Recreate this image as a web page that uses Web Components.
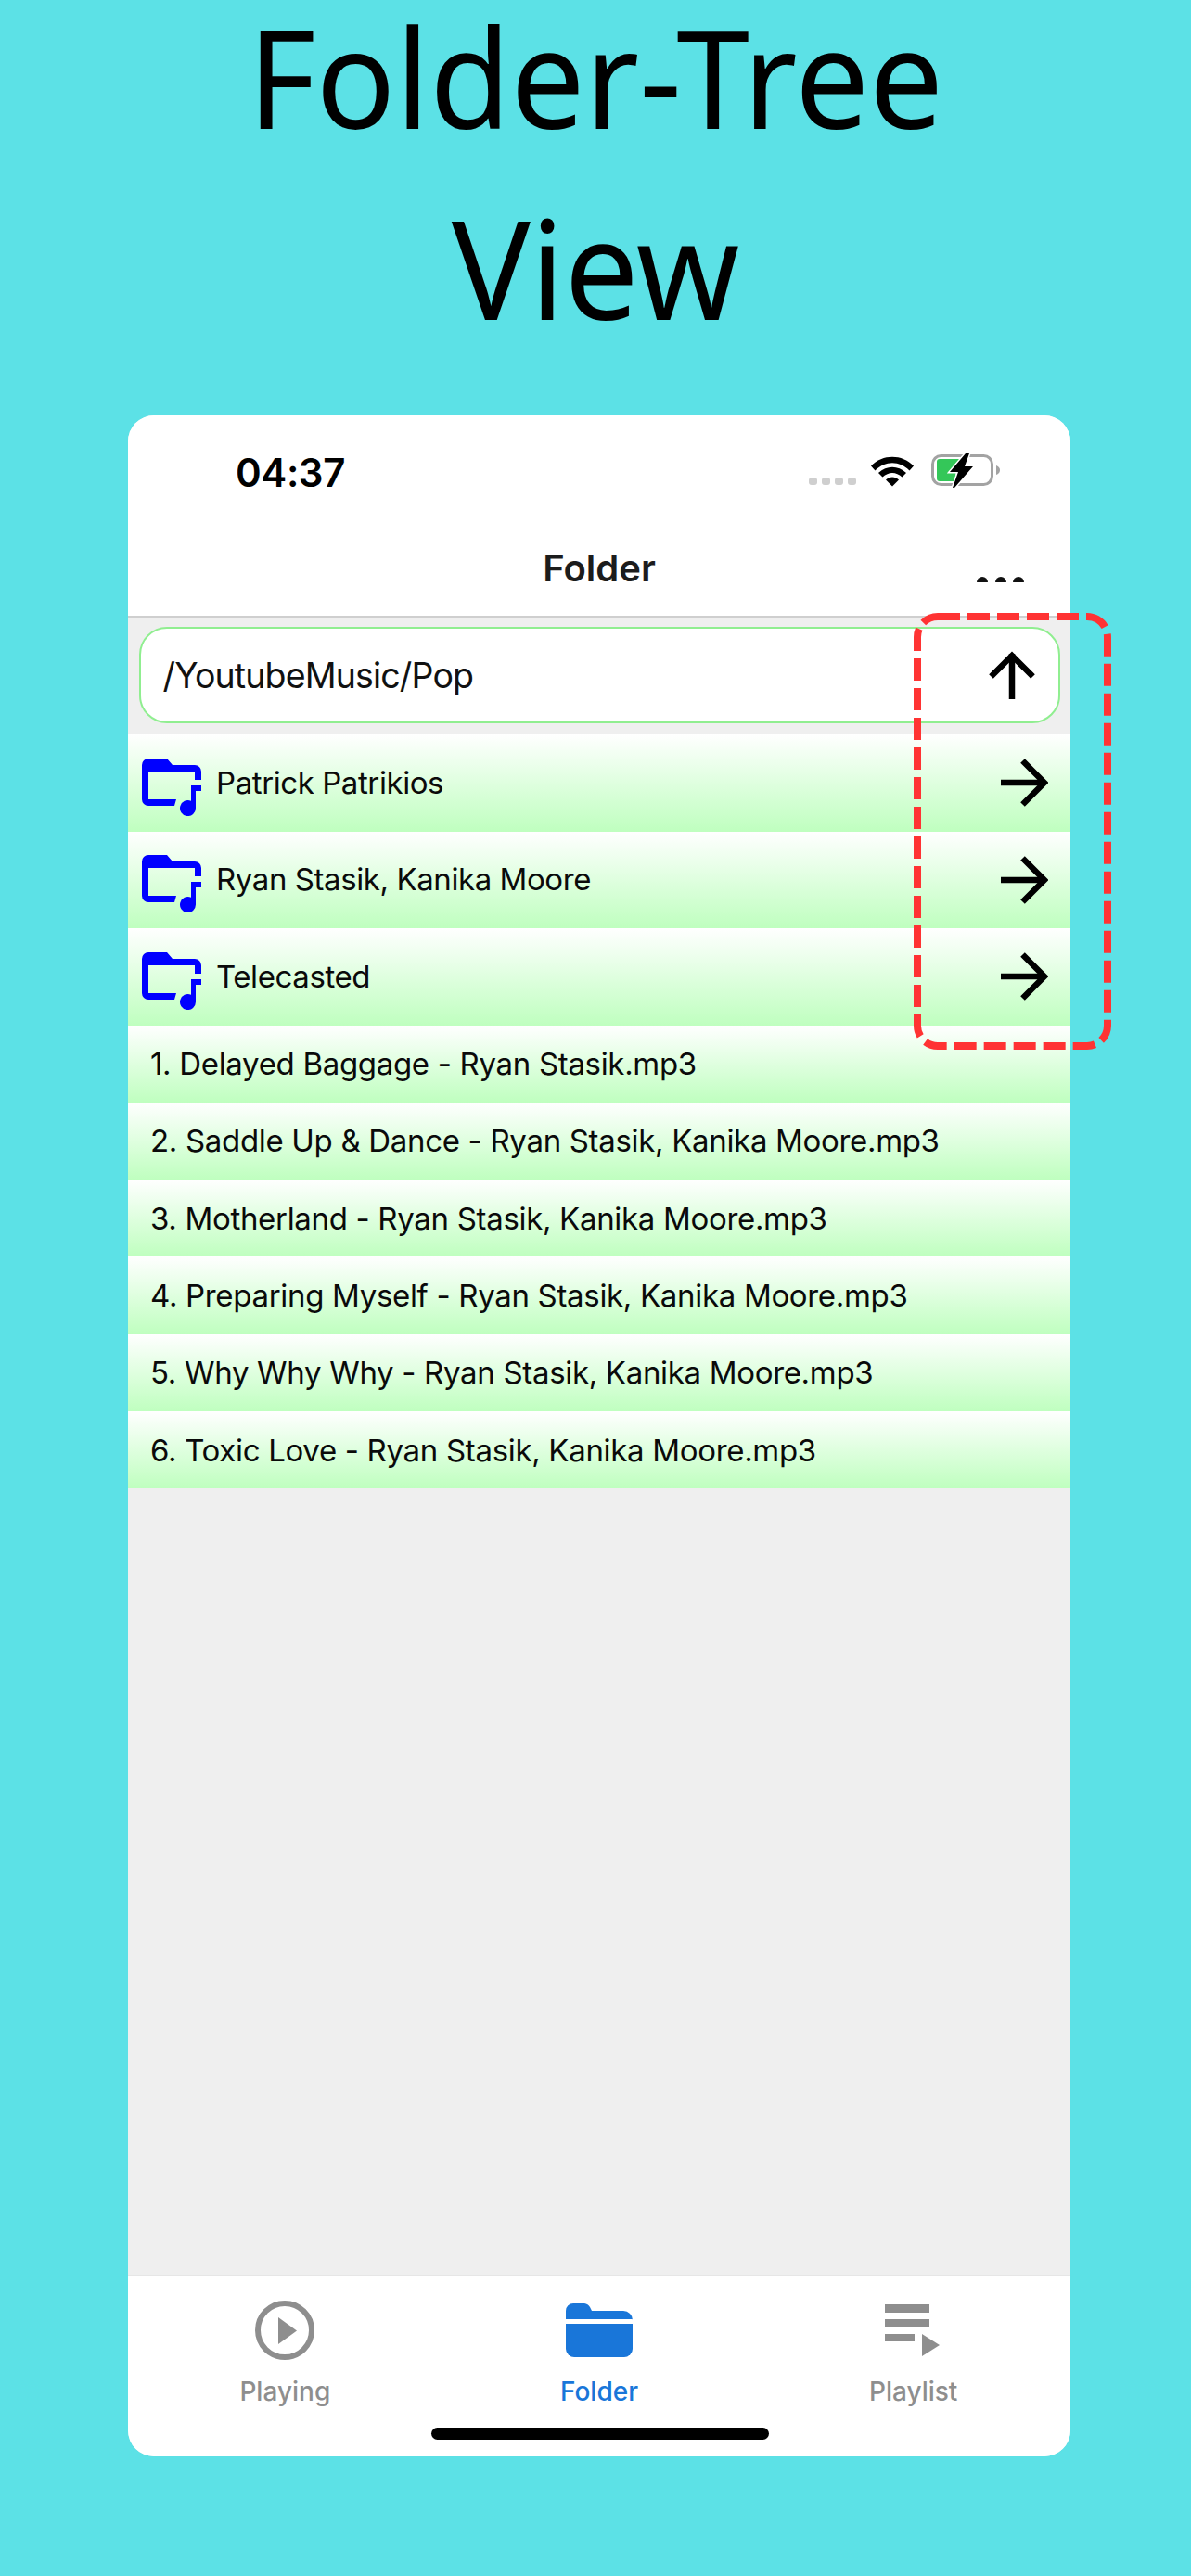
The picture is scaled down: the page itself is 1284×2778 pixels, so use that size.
<!DOCTYPE html>
<html>
<head>
<meta charset="utf-8">
<title>Folder-Tree View</title>
<style>
    html, body { margin: 0; padding: 0; }
    body { background: #5ce1e6; font-family: "Inter", "Liberation Sans", sans-serif; color: #000; }
</style>
</head>
<body>
<promo-page>
    <span slot="titulo">Folder-Tree<br>View</span>
    <phone-frame>
        <status-bar slot="status" hora="04:37"></status-bar>
        <nav-bar slot="nav" titulo="Folder"></nav-bar>
        <path-box slot="path" ruta="/YoutubeMusic/Pop"></path-box>
        <folder-row nombre="Patrick Patrikios"></folder-row>
        <folder-row nombre="Ryan Stasik, Kanika Moore"></folder-row>
        <folder-row nombre="Telecasted"></folder-row>
        <file-row>1. Delayed Baggage - Ryan Stasik.mp3</file-row>
        <file-row>2. Saddle Up &amp; Dance - Ryan Stasik, Kanika Moore.mp3</file-row>
        <file-row>3. Motherland - Ryan Stasik, Kanika Moore.mp3</file-row>
        <file-row>4. Preparing Myself - Ryan Stasik, Kanika Moore.mp3</file-row>
        <file-row>5. Why Why Why - Ryan Stasik, Kanika Moore.mp3</file-row>
        <file-row>6. Toxic Love - Ryan Stasik, Kanika Moore.mp3</file-row>
        <tab-bar slot="tabs"></tab-bar>
    </phone-frame>
    <dash-mark slot="marca"></dash-mark>
</promo-page>

<script>
// pagina completa: titulo y telefono
class PromoPage extends HTMLElement {
    connectedCallback() {
        this.attachShadow({mode: "open"}).innerHTML = `<style>
            :host { display: block; position: relative; width: 1284px; height: 2778px; overflow: hidden; }
            .titulo {
                height: 469px;
                margin-top: -21px;
                text-align: center;
                font-family: "Noto Sans", sans-serif;
                font-size: 142px;
                line-height: 198px;
                transform: scaleY(1.04);
                transform-origin: top center;
            }
            .telefono { padding: 0 130px 0 138px; }
        </style>
        <div class="titulo"><slot name="titulo"></slot></div>
        <div class="telefono"><slot></slot></div>
        <slot name="marca"></slot>`;
    }
}

class PhoneFrame extends HTMLElement {
    connectedCallback() {
        this.attachShadow({mode: "open"}).innerHTML = `<style>
            :host {
                display: flex;
                flex-direction: column;
                width: 1016px;
                height: 2201px;
                border-radius: 28px;
                overflow: hidden;
                background: #efefef;
            }
            .cabecera { background: #fff; border-bottom: 2px solid #cfcfcf; height: 216px; display: flex; flex-direction: column; flex: none; }
            .lista { flex: 1 1 auto; display: flex; flex-direction: column; }
        </style>
        <div class="cabecera">
            <slot name="status"></slot>
            <slot name="nav"></slot>
        </div>
        <div class="lista">
            <slot name="path"></slot>
            <slot></slot>
        </div>
        <slot name="tabs"></slot>`;
    }
}

class StatusBar extends HTMLElement {
    connectedCallback() {
        this.attachShadow({mode: "open"}).innerHTML = `<style>
            :host { display: flex; align-items: flex-start; height: 118px; padding: 40px 76px 0 116px; box-sizing: border-box; flex: none; }
            .hora { font-size: 42px; font-weight: 600; line-height: 44px; flex: 1 1 auto; letter-spacing: -0.4px; }
            .puntos { display: flex; gap: 5px; margin-top: 27px; margin-right: 16px; }
            .puntos i { width: 9px; height: 8px; border-radius: 3px; background: #cfcfcf; }
            svg { display: block; }
            .wifi { margin: 3px 19px 0 0; }
        </style>
        <div class="hora">${this.getAttribute("hora")}</div>
        <div class="puntos"><i></i><i></i><i></i><i></i></div>
        <svg class="wifi" width="46" height="34" viewBox="0 0 46 34">
            <path d="M0 11.5C12.5 -1.5 33.5 -1.5 46 11.5L41.5 16.5C31 5.5 15 5.5 4.5 16.5Z"/>
            <path d="M8 19C17 10.5 29 10.5 38 19L33.5 23.5C27 17.5 19 17.5 12.5 23.5Z"/>
            <path d="M16 26.5C20 22.5 26 22.5 30 26.5L23 33.5Z"/>
        </svg>
        <svg width="74" height="38" viewBox="0 0 74 38" style="margin-top:1px">
            <rect x="1.5" y="2.5" width="64" height="31" rx="9" fill="none" stroke="#a3a3a3" stroke-width="3"/>
            <path d="M70 13c3 1 4 3 4 5s-1 4-4 5z" fill="#a3a3a3"/>
            <path d="M6 9a3 3 0 0 1 3-3h22l-10 13h6l-2 11H9a3 3 0 0 1-3-3z" fill="#34c759"/>
            <path d="M37 0L20 20h9l-6 17h2L45 14h-9l5-14z" stroke="#fff" stroke-width="3" paint-order="stroke"/>
        </svg>`;
    }
}

class NavBar extends HTMLElement {
    connectedCallback() {
        this.attachShadow({mode: "open"}).innerHTML = `<style>
            :host { display: block; position: relative; flex: 1 1 auto; text-align: center; }
            .titulo { font-size: 40px; font-weight: 600; line-height: 48px; padding-top: 23px; color: #1c1c1c; }
            /* tres puntos cortados por abajo, van sobre la barra */
            .mas { position: absolute; left: 915px; top: 56px; width: 51px; height: 6px; overflow: hidden; display: flex; justify-content: space-between; }
            .mas i { flex: none; width: 12px; height: 12px; border-radius: 50%; background: #111; }
        </style>
        <div class="titulo">${this.getAttribute("titulo")}</div>
        <div class="mas"><i></i><i></i><i></i></div>`;
    }
}

class PathBox extends HTMLElement {
    connectedCallback() {
        this.attachShadow({mode: "open"}).innerHTML = `<style>
            :host { display: block; padding: 10px 11px 12px 12px; flex: none; }
            .caja {
                height: 104px;
                box-sizing: border-box;
                background: #fff;
                border: 2.5px solid #90ee90;
                border-radius: 30px;
                display: flex;
                align-items: center;
                padding: 0 25px 0 23.5px;
            }
            .ruta { flex: 1 1 auto; font-size: 37.5px; letter-spacing: -0.85px; color: #111; }
            svg { display: block; }
        </style>
        <div class="caja">
            <div class="ruta">${this.getAttribute("ruta")}</div>
            <svg width="50" height="52" viewBox="0 0 50 52" fill="none" stroke="#000" stroke-width="6.500">
                <path d="M25 52V3"/>
                <path d="M2.500 27.500L25 5L47.500 27.500"/>
            </svg>
        </div>`;
    }
}

class FolderRow extends HTMLElement {
    connectedCallback() {
        this.attachShadow({mode: "open"}).innerHTML = `<style>
            :host {
                display: flex;
                align-items: center;
                flex: none;
                height: 104.5px;
                padding: 0 24px 0 15px;
                box-sizing: border-box;
                background: linear-gradient(#ffffff, #bfffbf);
            }
            .icono { display: block; flex: none; width: 64px; height: 62px; margin: 9px 16px 0 0; }
            .nombre { flex: 1 1 auto; font-size: 33px; letter-spacing: -0.42px; margin-top: -1px; color: #0a0a0a; }
        </style>
        <svg class="icono" viewBox="0 0 64 62" fill="#0000ff">
            <path d="M7 0H27L33 7H57a7 7 0 0 1 7 7V23H57V14H7V44H37L35 51H7a7 7 0 0 1-7-7V7a7 7 0 0 1 7-7Z"/>
            <path d="M53 29H64V35H58V53.500a8.500 8.500 0 1 1-5-7.700Z"/>
        </svg>
        <div class="nombre">${this.getAttribute("nombre")}</div>
        <svg width="52" height="52" viewBox="0 0 52 52" fill="none" stroke="#000" stroke-width="6.500">
            <path d="M1 26H48"/>
            <path d="M24.500 2.500L48 26L24.500 49.500"/>
        </svg>`;
    }
}

class FileRow extends HTMLElement {
    connectedCallback() {
        this.attachShadow({mode: "open"}).innerHTML = `<style>
            :host {
                display: flex;
                align-items: center;
                flex: none;
                height: 83.3px;
                padding: 0 0 0 24px;
                box-sizing: border-box;
                background: linear-gradient(#ffffff, #bfffbf);
                font-size: 33px;
                letter-spacing: -0.32px;
                color: #0a0a0a;
            }
        </style>
        <slot></slot>`;
    }
}

class TabBar extends HTMLElement {
    connectedCallback() {
        this.attachShadow({mode: "open"}).innerHTML = `<style>
            :host {
                display: grid;
                grid-template-columns: repeat(3, 1fr);
                flex: none;
                height: 196px;
                box-sizing: border-box;
                background: #fff;
                border-top: 2px solid #e6e6e6;
                position: relative;
            }
            .tab { display: flex; flex-direction: column; align-items: center; color: #8e8e8e; font-size: 28px; font-weight: 500; }
            .tab.activa { color: #1976d9; }
            .ico { height: 66px; margin-top: 25px; display: flex; align-items: center; }
            .txt { line-height: 34px; margin-top: 16px; }
            svg { display: block; }
            .home { position: absolute; left: 327px; top: 163px; width: 364px; height: 13px; border-radius: 7px; background: #000; }
        </style>
        <div class="tab">
            <div class="ico"><svg width="64" height="64" viewBox="0 0 64 64">
                <circle cx="32" cy="32" r="29" fill="none" stroke="#8e8e8e" stroke-width="6"/>
                <path d="M25 18L45 32.500L25 47Z" fill="#8e8e8e"/>
            </svg></div>
            <div class="txt">Playing</div>
        </div>
        <div class="tab activa">
            <div class="ico"><svg width="72" height="58" viewBox="0 0 72 58" fill="#1976d9">
                <path d="M0 17V8a8 8 0 0 1 8-8H20a8 8 0 0 1 6 4l2 4H62a10 10 0 0 1 10 10V17Z"/>
                <path d="M0 22H72V49a9 9 0 0 1-9 9H9a9 9 0 0 1-9-9Z"/>
            </svg></div>
            <div class="txt">Folder</div>
        </div>
        <div class="tab">
            <div class="ico"><svg width="60" height="56" viewBox="0 0 60 56" fill="#8e8e8e" style="margin-left:-2px">
                <rect x="0" y="0" width="48" height="9"/>
                <rect x="0" y="16" width="48" height="8"/>
                <rect x="0" y="32" width="32" height="8"/>
                <path d="M40 32L59 44L40 56Z"/>
            </svg></div>
            <div class="txt">Playlist</div>
        </div>
        <div class="home"></div>`;
    }
}

// recuadro rojo discontinuo encima del telefono
class DashMark extends HTMLElement {
    connectedCallback() {
        this.attachShadow({mode: "open"}).innerHTML = `<style>
            :host { position: absolute; left: 985px; top: 661px; width: 213px; height: 471px; display: block; }
            svg { display: block; }
        </style>
        <svg width="213" height="471" viewBox="0 0 213 471">
            <rect x="4" y="4" width="205" height="463" rx="22" fill="none" stroke="#ff3333" stroke-width="8" stroke-dasharray="24 8"/>
        </svg>`;
    }
}

customElements.define("promo-page", PromoPage);
customElements.define("phone-frame", PhoneFrame);
customElements.define("status-bar", StatusBar);
customElements.define("nav-bar", NavBar);
customElements.define("path-box", PathBox);
customElements.define("folder-row", FolderRow);
customElements.define("file-row", FileRow);
customElements.define("tab-bar", TabBar);
customElements.define("dash-mark", DashMark);
</script>
</body>
</html>
